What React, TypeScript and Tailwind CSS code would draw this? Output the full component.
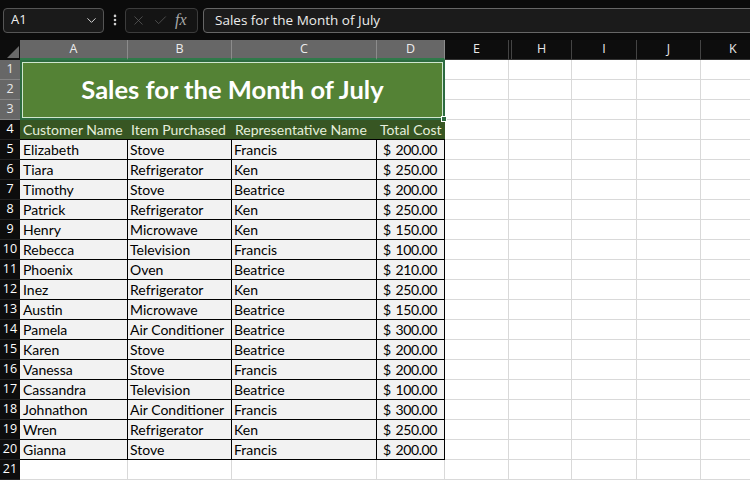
import { ChevronDown, X, Check, EllipsisVertical } from "lucide-react";

interface SaleRow {
  customer: string;
  item: string;
  rep: string;
  cost: string;
}

const sales: SaleRow[] = [
  { customer: "Elizabeth", item: "Stove", rep: "Francis", cost: "200.00" },
  { customer: "Tiara", item: "Refrigerator", rep: "Ken", cost: "250.00" },
  { customer: "Timothy", item: "Stove", rep: "Beatrice", cost: "200.00" },
  { customer: "Patrick", item: "Refrigerator", rep: "Ken", cost: "250.00" },
  { customer: "Henry", item: "Microwave", rep: "Ken", cost: "150.00" },
  { customer: "Rebecca", item: "Television", rep: "Francis", cost: "100.00" },
  { customer: "Phoenix", item: "Oven", rep: "Beatrice", cost: "210.00" },
  { customer: "Inez", item: "Refrigerator", rep: "Ken", cost: "250.00" },
  { customer: "Austin", item: "Microwave", rep: "Beatrice", cost: "150.00" },
  { customer: "Pamela", item: "Air Conditioner", rep: "Beatrice", cost: "300.00" },
  { customer: "Karen", item: "Stove", rep: "Beatrice", cost: "200.00" },
  { customer: "Vanessa", item: "Stove", rep: "Francis", cost: "200.00" },
  { customer: "Cassandra", item: "Television", rep: "Beatrice", cost: "100.00" },
  { customer: "Johnathon", item: "Air Conditioner", rep: "Francis", cost: "300.00" },
  { customer: "Wren", item: "Refrigerator", rep: "Ken", cost: "250.00" },
  { customer: "Gianna", item: "Stove", rep: "Francis", cost: "200.00" },
];

const cellFont = "font-['Lato','Noto_Sans',sans-serif] text-[14px] leading-[19px]";
const hdrFont = "font-['Open_Sans','Noto_Sans',sans-serif] text-[12.5px]";

// empty cells to the right of the table (E, H, I, J, K)
const EmptyCells = () => (
  <>
    <div className="border-r border-b border-[#d9d9d9] bg-white" />
    <div className="border-r border-b border-[#d9d9d9] bg-white" />
    <div className="border-r border-b border-[#d9d9d9] bg-white" />
    <div className="border-r border-b border-[#d9d9d9] bg-white" />
    <div className="border-b border-[#d9d9d9] bg-white" />
  </>
);

const RowHeader = ({ n, selected }: { n: number; selected?: boolean }) => (
  <div
    className={
      selected
        ? `flex items-center justify-center bg-[#676767] text-[#e8e8e8] border-b border-[#858585] ${hdrFont}`
        : `flex items-center justify-center bg-[#0d0d0d] text-white border-b border-[#222] ${hdrFont}`
    }
  >
    {n}
  </div>
);

const App = () => {
  return (
    <div className="w-[750px] h-[480px] overflow-hidden bg-white">
      {/* formula bar */}
      <div className="h-[40px] bg-[#0b0b0b] flex items-center pl-[3px] overflow-hidden font-['Open_Sans','Noto_Sans',sans-serif]">
        <div className="w-[101px] h-[25px] shrink-0 rounded-[4px] border border-[#555] bg-[#1a1a1a] flex items-center justify-between pl-[7px] pr-[4px]">
          <span className="text-[13px] text-[#f0f0f0]">A1</span>
          <ChevronDown size={15} strokeWidth={1.6} className="text-[#d8d8d8]" />
        </div>
        <div className="w-[21px] shrink-0 flex justify-center">
          <EllipsisVertical size={14} strokeWidth={2.5} className="text-[#cfcfcf]" />
        </div>
        <div className="w-[73px] h-[25px] shrink-0 rounded-[4px] border border-[#3c3c3c] bg-[#141414] flex items-center pl-[5px] gap-[7px]">
          <X size={15} strokeWidth={1.2} className="text-[#5e5e5e]" />
          <Check size={15} strokeWidth={1.2} className="text-[#5e5e5e]" />
          <span className="font-['Liberation_Serif',serif] italic text-[16px] text-[#a8a8a8] leading-none">fx</span>
        </div>
        <div className="ml-[5px] w-[570px] h-[25px] shrink-0 rounded-[4px] border border-[#666] bg-[#1b1b1b] flex items-center pl-[11px]">
          <span className="text-[13.5px] text-[#ececec]">Sales for the Month of July</span>
        </div>
      </div>

      {/* sheet grid */}
      <div className="grid grid-cols-[20px_108px_104px_145px_68px_64px_63px_65px_64px_1fr] auto-rows-[20px]">
        {/* column headers */}
        <div className="relative bg-[#0d0d0d]">
          <div className="absolute right-[1px] bottom-[2px] w-0 h-0 border-l-[12px] border-l-transparent border-b-[12px] border-b-[#6a6a6a]" />
        </div>
        {["A", "B", "C", "D"].map((c) => (
          <div
            key={c}
            className={`flex items-center justify-center bg-[#676767] text-[#ececec] border-r border-[#8c8c8c] border-b-2 border-b-[#2f7a4a] ${hdrFont}`}
          >
            {c}
          </div>
        ))}
        <div className={`flex items-center justify-center bg-[#0d0d0d] text-[#e8e8e8] border-r border-[#444] border-b border-b-[#333] ${hdrFont}`}>
          E
        </div>
        <div className={`flex bg-[#0d0d0d] text-[#e8e8e8] border-r border-[#444] border-b border-b-[#333] ${hdrFont}`}>
          <div className="ml-[2px] flex-1 flex items-center justify-center border-l border-[#444]">H</div>
        </div>
        {["I", "J"].map((c) => (
          <div key={c} className={`flex items-center justify-center bg-[#0d0d0d] text-[#e8e8e8] border-r border-[#444] border-b border-b-[#333] ${hdrFont}`}>
            {c}
          </div>
        ))}
        <div className={`flex items-center justify-start pl-[28px] bg-[#0d0d0d] text-[#e8e8e8] border-b border-b-[#333] ${hdrFont}`}>
          K
        </div>

        {/* rows 1-3: merged title */}
        <RowHeader n={1} selected />
        <div className="col-span-4 row-span-3 relative bg-[#548235] border-2 border-[#2c6b40] shadow-[inset_0_0_0_1px_#cfe6cf] flex items-center justify-center">
          <span className="font-['Lato','Noto_Sans',sans-serif] font-bold text-[25.5px] text-white pb-[1px]">
            Sales for the Month of July
          </span>
          <div className="absolute -right-[4px] -bottom-[4px] w-[6px] h-[6px] bg-[#2c6b40] border border-white" />
        </div>
        <EmptyCells />
        <RowHeader n={2} selected />
        <EmptyCells />
        <RowHeader n={3} selected />
        <EmptyCells />

        {/* row 4: column titles */}
        <RowHeader n={4} />
        {["Customer Name", "Item Purchased", "Representative Name", "Total Cost"].map((t) => (
          <div
            key={t}
            className={`bg-[#375623] text-[#e6f0dc] border-b border-black pl-[3px] whitespace-nowrap overflow-hidden ${cellFont}`}
          >
            {t}
          </div>
        ))}
        <EmptyCells />

        {/* data rows */}
        {sales.map((s, i) => (
          <div key={s.customer} className="contents">
            <RowHeader n={i + 5} />
            <div className={`bg-[#f2f2f2] text-black border-r border-b border-black pl-[3px] whitespace-nowrap ${cellFont}`}>
              {s.customer}
            </div>
            <div className={`bg-[#f2f2f2] text-black border-r border-b border-black pl-[2px] whitespace-nowrap ${cellFont}`}>
              {s.item}
            </div>
            <div className={`bg-[#f2f2f2] text-black border-r border-b border-black pl-[2px] whitespace-nowrap ${cellFont}`}>
              {s.rep}
            </div>
            <div className={`bg-[#f2f2f2] text-black border-r border-b border-black pl-[6px] pr-[7px] flex justify-between whitespace-nowrap ${cellFont}`}>
              <span>$</span>
              <span className="tracking-[-0.4px]">{s.cost}</span>
            </div>
            <EmptyCells />
          </div>
        ))}

        {/* row 21 */}
        <RowHeader n={21} />
        <div className="border-r border-b border-[#d9d9d9] bg-white" />
        <div className="border-r border-b border-[#d9d9d9] bg-white" />
        <div className="border-r border-b border-[#d9d9d9] bg-white" />
        <div className="border-r border-b border-[#d9d9d9] bg-white" />
        <EmptyCells />
      </div>
    </div>
  );
};

export default App;
